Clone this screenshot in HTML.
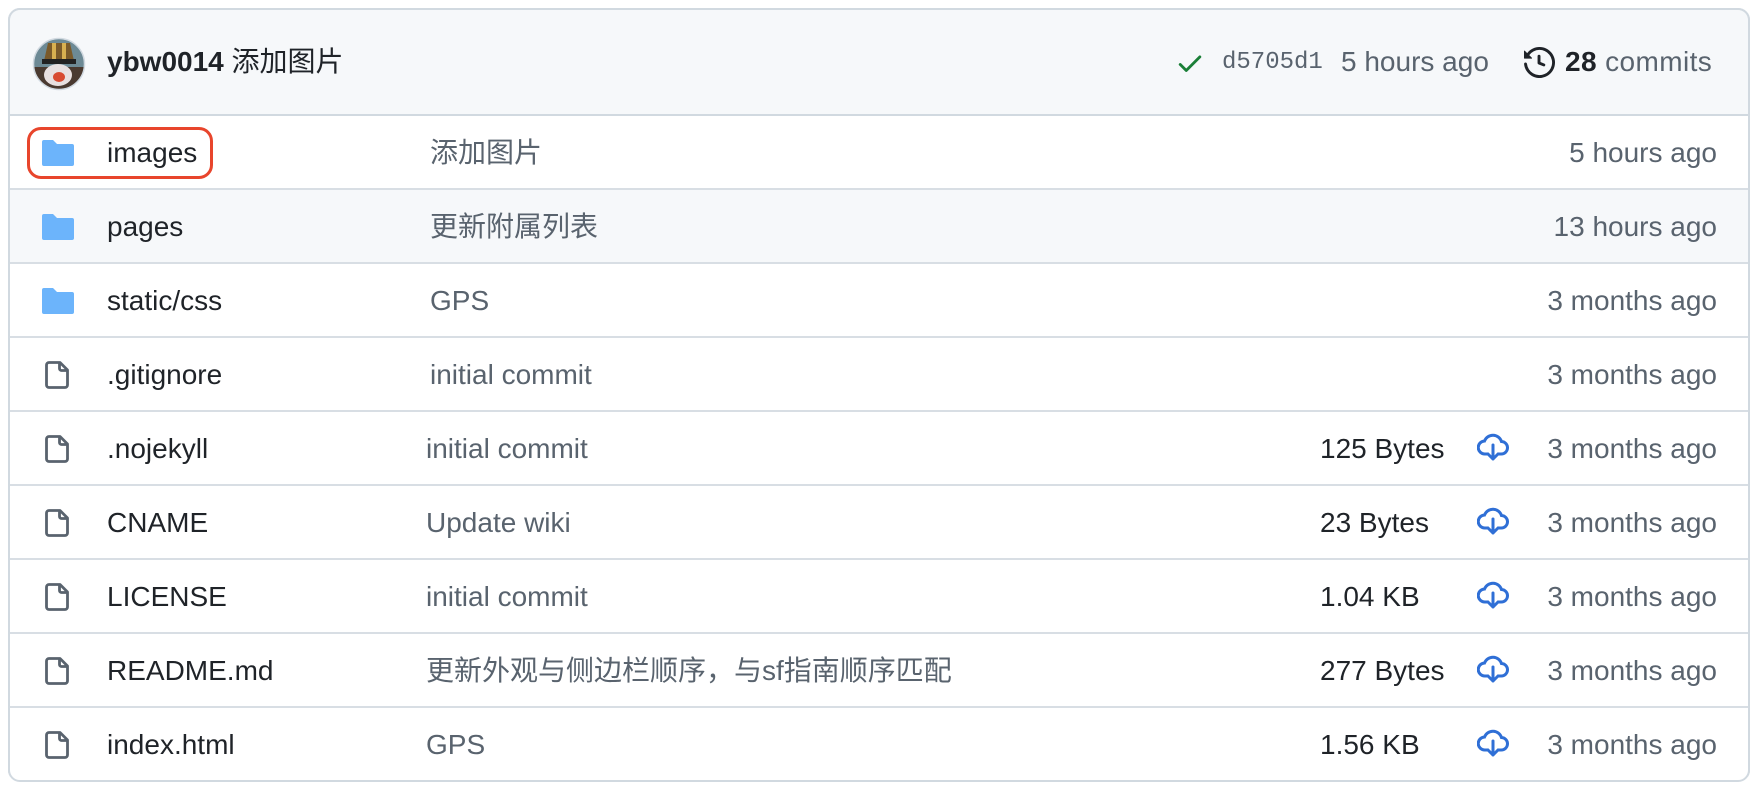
<!DOCTYPE html>
<html><head><meta charset="utf-8"><style>
*{margin:0;padding:0;box-sizing:border-box}
body{width:1758px;height:790px;background:#fff;font-family:"Liberation Sans","Noto Sans CJK SC",sans-serif;position:relative;overflow:hidden;color:#1f2328}
.box{position:absolute;left:8px;top:8px;width:1742px;height:774px;border:2px solid #d1d9e0;border-radius:12px;overflow:hidden}
.hdr{position:absolute;left:0;top:0;width:100%;height:106px;background:#f6f8fa;border-bottom:2px solid #d1d9e0}
.t{position:absolute;font-size:28px;line-height:30px;white-space:nowrap}
.m{color:#59636e}
</style></head><body>
<div class="box">
<div class="hdr">
 <svg style="position:absolute;left:22px;top:27px" width="54" height="54" viewBox="0 0 54 54">
  <defs><clipPath id="c"><circle cx="27" cy="27" r="25"/></clipPath></defs>
  <g clip-path="url(#c)">
   <rect width="54" height="54" fill="#6d8a95"/>
   <rect x="0" y="30" width="54" height="24" fill="#4a3a30"/>
   <path d="M12 24 L16 6 L38 6 L42 24 Z" fill="#7a5a2a"/>
   <rect x="20" y="6" width="4" height="18" fill="#d8b050"/><rect x="30" y="6" width="4" height="18" fill="#d8b050"/>
   <rect x="10" y="22" width="34" height="5" fill="#222"/>
   <ellipse cx="26" cy="38" rx="14" ry="11" fill="#e8e0e0"/>
   <ellipse cx="27" cy="40" rx="6" ry="5" fill="#d84a30"/>
  </g>
  <circle cx="27" cy="27" r="25.5" fill="none" stroke="#d1d9e0" stroke-width="1.5"/>
 </svg>
 <div class="t" style="left:97px;top:37px;font-weight:bold">ybw0014 <span style="font-weight:normal">添加图片</span></div>
 <svg style="position:absolute;left:1165px;top:38px" width="30" height="30" viewBox="0 0 16 16"><path d="M13.78 4.22a.75.75 0 0 1 0 1.06l-7.25 7.25a.75.75 0 0 1-1.06 0L2.22 9.28a.75.75 0 0 1 1.06-1.06L6 10.94l6.72-6.72a.75.75 0 0 1 1.06 0Z" fill="#1a7f37"/></svg>
 <div class="t m" style="left:1212px;top:38px;font-family:'Liberation Mono',monospace;font-size:24px">d5705d1</div>
 <div class="t m" style="left:1331px;top:37px">5 hours ago</div>
 <svg style="position:absolute;left:1514px;top:37px" width="31" height="31" viewBox="0 0 16 16"><path fill="#1f2328" d="m.427 1.927 1.215 1.215a8.002 8.002 0 1 1-1.6 5.685.75.75 0 1 1 1.493-.154 6.5 6.5 0 1 0 1.18-4.458l1.358 1.358A.25.25 0 0 1 3.896 6H.25A.25.25 0 0 1 0 5.75V2.104a.25.25 0 0 1 .427-.177ZM7.75 4a.75.75 0 0 1 .75.75v2.992l2.028.812a.75.75 0 0 1-.557 1.392l-2.5-1A.751.751 0 0 1 7 8.25v-3.5A.75.75 0 0 1 7.75 4Z"/></svg>
 <div class="t" style="left:1555px;top:37px;letter-spacing:0.4px"><b>28</b> <span class="m">commits</span></div>
</div>
</div>
<div id="rows"></div>
<div style="position:absolute;left:8px;top:8px;width:1742px;height:774px;border:2px solid #d1d9e0;border-radius:12px"></div>
<script>
var folder='<svg width="32" height="26" viewBox="0 0 32 26"><path d="M2 0h9l4 4h15a2 2 0 0 1 2 2v18a2 2 0 0 1-2 2H2a2 2 0 0 1-2-2V2a2 2 0 0 1 2-2z" fill="#6cb4fb"/></svg>';
var file='<svg width="26" height="28" viewBox="0 0 26 28"><path d="M4 1.5h11l7.5 7.5v15a2.5 2.5 0 0 1-2.5 2.5H4A2.5 2.5 0 0 1 1.5 24V4A2.5 2.5 0 0 1 4 1.5z M14.5 1.5v6a2 2 0 0 0 2 2h6" fill="none" stroke="#59636e" stroke-width="2.8" stroke-linejoin="round"/></svg>';
var dl='<svg width="32" height="30" viewBox="0 0 32 30"><path d="M10 21H8a6.5 6.5 0 0 1-.5-13A9 9 0 0 1 24.5 8.5 6 6 0 0 1 24 21h-2" fill="none" stroke="#2f6fd6" stroke-width="3" stroke-linecap="round"/><path d="M16 12v14M11 21l5 5 5-5" fill="none" stroke="#2f6fd6" stroke-width="3" stroke-linecap="round" stroke-linejoin="round"/></svg>';
var R=[['f','images','添加图片','','5 hours ago',430],['f','pages','更新附属列表','','13 hours ago',430],['f','static/css','GPS','','3 months ago',430],['d','.gitignore','initial commit','','3 months ago',430],['d','.nojekyll','initial commit','125 Bytes','3 months ago',426],['d','CNAME','Update wiki','23 Bytes','3 months ago',426],['d','LICENSE','initial commit','1.04 KB','3 months ago',426],['d','README.md','更新外观与侧边栏顺序，与sf指南顺序匹配','277 Bytes','3 months ago',426],['d','index.html','GPS','1.56 KB','3 months ago',426]];
var h='';
R.forEach(function(r,i){var top=116+i*74;var bg=i==1?'#f6f8fa':'#fff';
h+='<div style="position:absolute;left:10px;top:'+top+'px;width:1738px;height:74px;background:'+bg+';'+(i<8?'border-bottom:2px solid #d8dee4':'')+'"></div>';
var c=top+37;
h+='<div style="position:absolute;left:'+(r[0]=='f'?42:45)+'px;top:'+(c-13-(r[0]=='f'?0:1))+'px">'+(r[0]=='f'?folder:file)+'</div>';
h+='<div class="t" style="left:107px;top:'+(c-15)+'px">'+r[1]+'</div>';
h+='<div class="t m" style="left:'+r[5]+'px;top:'+(c-15)+'px">'+r[2]+'</div>';
if(r[3]){h+='<div class="t" style="left:1320px;top:'+(c-15)+'px">'+r[3]+'</div>';h+='<div style="position:absolute;left:1477px;top:'+(c-16)+'px">'+dl+'</div>';}
h+='<div class="t m" style="right:41px;top:'+(c-15)+'px">'+r[4]+'</div>';
});
h+='<div style="position:absolute;left:27px;top:127px;width:186px;height:52px;border:3px solid #e8452c;border-radius:14px"></div>';
document.getElementById('rows').innerHTML=h;
</script>
</body></html>
